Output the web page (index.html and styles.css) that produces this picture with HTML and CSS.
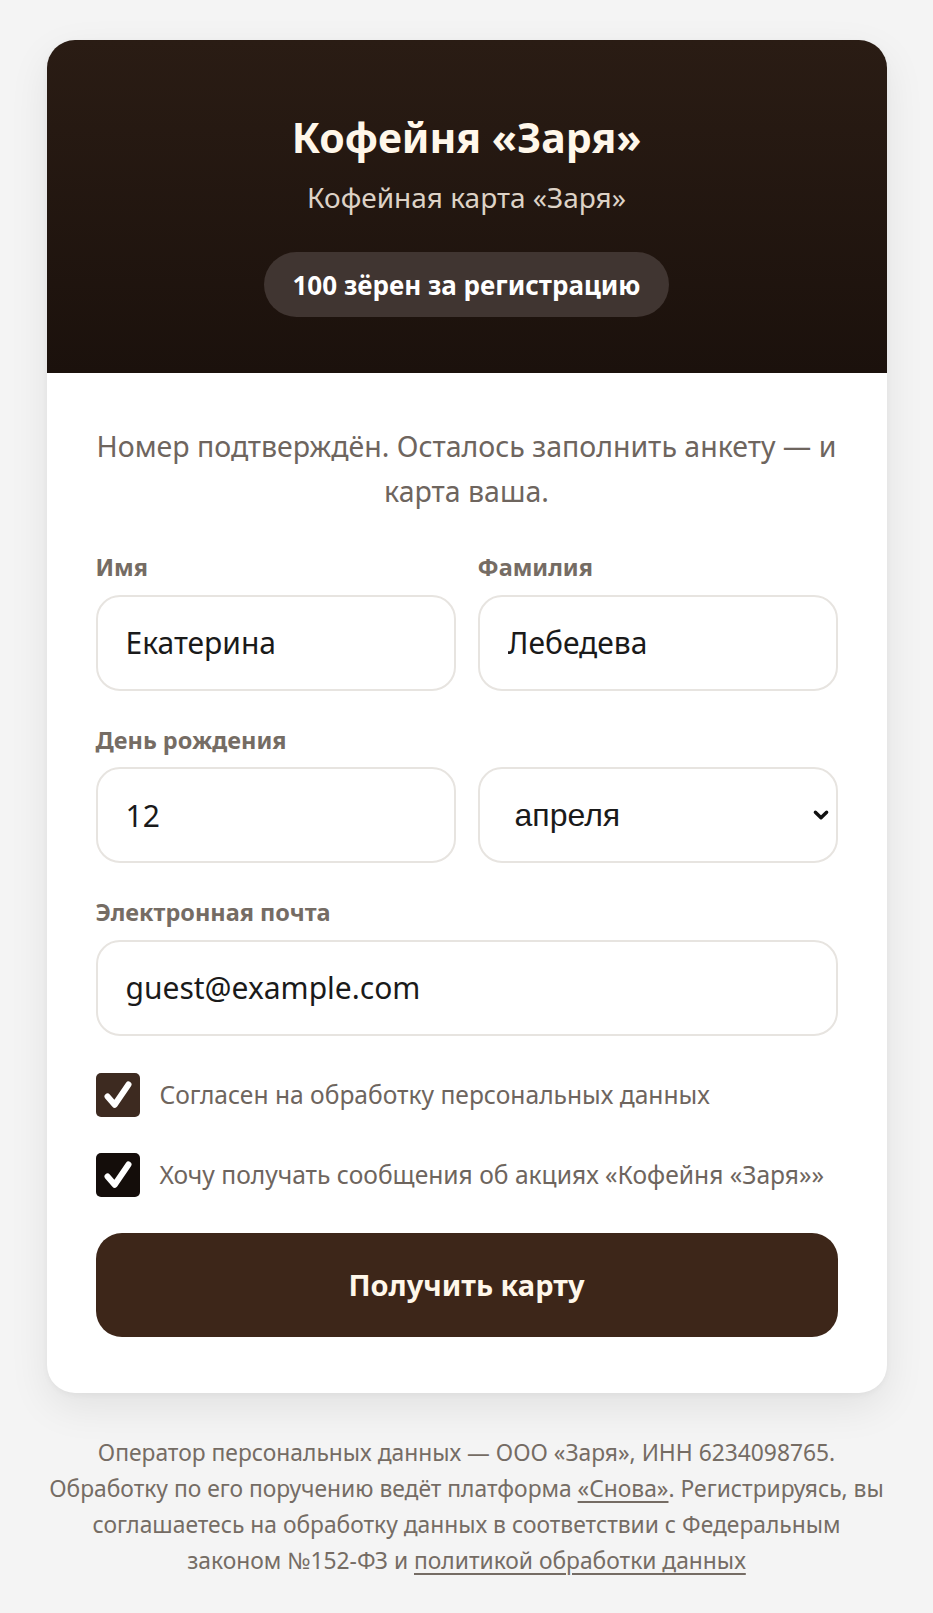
FILE: index.html
```html
<!DOCTYPE html>
<html lang="ru">
<head>
<meta charset="utf-8">
<title>Кофейня «Заря»</title>
<link rel="stylesheet" href="styles.css">
</head>
<body>
<main class="page">
  <section class="card">
    <header class="hero">
      <h1 class="hero-title">Кофейня «Заря»</h1>
      <p class="hero-sub">Кофейная карта «Заря»</p>
      <span class="pill">100 зёрен за регистрацию</span>
    </header>
    <form class="form">
      <p class="intro">Номер подтверждён. Осталось заполнить анкету — и карта ваша.</p>
      <div class="row">
        <label class="field">
          <span class="label">Имя</span>
          <input class="input" type="text" value="Екатерина">
        </label>
        <label class="field">
          <span class="label">Фамилия</span>
          <input class="input" type="text" value="Лебедева">
        </label>
      </div>
      <div class="field">
        <span class="label">День рождения</span>
        <div class="row">
          <input class="input" type="text" value="12">
          <div class="select-wrap">
            <select class="select">
              <option>апреля</option>
            </select>
            <svg class="chevron" viewBox="0 0 16 16" width="18" height="18" aria-hidden="true"><path d="M3 5.5 L8 10.5 L13 5.5" fill="none" stroke="#111" stroke-width="3" stroke-linecap="round" stroke-linejoin="round"/></svg>
          </div>
        </div>
      </div>
      <label class="field">
        <span class="label">Электронная почта</span>
        <input class="input" type="email" value="guest@example.com">
      </label>
      <div class="checks">
        <label class="check">
          <span class="box box-brown"><svg viewBox="0 0 24 24" width="36" height="36"><path d="M5 13 L9.8 18.5 L19 5" fill="none" stroke="#fff" stroke-width="4" stroke-linecap="round" stroke-linejoin="round"/></svg></span>
          <span class="check-text">Согласен на обработку персональных данных</span>
        </label>
        <label class="check">
          <span class="box box-dark"><svg viewBox="0 0 24 24" width="36" height="36"><path d="M5 13 L9.8 18.5 L19 5" fill="none" stroke="#fff" stroke-width="4" stroke-linecap="round" stroke-linejoin="round"/></svg></span>
          <span class="check-text">Хочу получать сообщения об акциях «Кофейня «Заря»»</span>
        </label>
      </div>
      <button class="btn" type="button">Получить карту</button>
    </form>
  </section>
  <p class="legal">Оператор персональных данных — ООО «Заря», ИНН 6234098765. Обработку по его поручению ведёт платформа <a href="#" class="link">«Снова»</a>. Регистрируясь, вы соглашаетесь на обработку данных в соответствии с Федеральным законом №152-ФЗ и <a href="#" class="link">политикой обработки данных</a></p>
</main>
</body>
</html>
```
FILE: styles.css
```css
* { box-sizing: border-box; }
html, body { margin: 0; padding: 0; }
body {
  background: #f4f4f4;
  font-family: "Segoe UI", "Noto Sans", "Open Sans", sans-serif;
  color: #1a1a1a;
}
.page {
  width: 840px;
  margin: 0 auto;
  padding: 40px 0 40px;
}
.card {
  background: #fff;
  border-radius: 28px;
  overflow: hidden;
  box-shadow: 0 14px 40px rgba(0,0,0,0.08), 0 2px 6px rgba(0,0,0,0.04);
}
.hero {
  background: linear-gradient(180deg, #2a1c14 0%, #1b110c 100%);
  padding: 71px 40px 56px;
  display: flex;
  flex-direction: column;
  align-items: center;
  text-align: center;
}
.hero-title {
  margin: 0;
  font-size: 41px;
  line-height: 52px;
  font-weight: 700;
  color: #fff7ea;
}
.hero-sub {
  margin: 15px 0 0;
  font-size: 28px;
  line-height: 38px;
  color: #ddd2c6;
}
.pill {
  margin-top: 36px;
  height: 65px;
  padding: 0 29px;
  display: inline-flex;
  align-items: center;
  border-radius: 33px;
  background: #403531;
  color: #fff;
  font-size: 26px;
  font-weight: 700;
}
.form {
  padding: 51px 49px 56px;
  display: flex;
  flex-direction: column;
}
.intro {
  margin: 0 0 38px;
  text-align: center;
  font-size: 28.5px;
  line-height: 45px;
  color: #6e655e;
}
.row {
  display: grid;
  grid-template-columns: 1fr 1fr;
  gap: 22px;
}
.form > .row { margin-bottom: 34px; }
.field {
  display: flex;
  flex-direction: column;
  gap: 12.5px;
  min-width: 0;
}
.form > .field { margin-bottom: 34px; }
.form > .field:last-of-type { margin-bottom: 0; }
.label {
  font-size: 23.5px;
  line-height: 30px;
  font-weight: 700;
  color: #756c64;
}
.input, .select {
  width: 100%;
  height: 96px;
  border: 2px solid #e7e4e0;
  border-radius: 24px;
  background: #fff;
  padding: 0 28px;
  font-family: inherit;
  font-size: 30px;
  color: #1a1a1a;
  outline: none;
}
.select-wrap {
  position: relative;
  min-width: 0;
}
.select {
  appearance: none;
  -webkit-appearance: none;
  font-family: "Liberation Sans", Arial, sans-serif;
  font-size: 32px;
  padding-left: 35px;
}
.chevron {
  position: absolute;
  right: 8px;
  top: 50%;
  transform: translateY(-50%);
  pointer-events: none;
}
.checks {
  display: flex;
  flex-direction: column;
  gap: 36px;
  margin: 37px 0 36px;
}
.check {
  display: flex;
  align-items: center;
  gap: 20px;
}
.box {
  flex: none;
  width: 44px;
  height: 44px;
  border-radius: 5px;
  display: flex;
  align-items: center;
  justify-content: center;
}
.box-brown { background: #3d2a20; }
.box-dark { background: #140d0a; }
.check-text {
  font-size: 24.6px;
  line-height: 30px;
  color: #6e655e;
  white-space: nowrap;
}
.btn {
  height: 104px;
  border: 0;
  border-radius: 26px;
  background: #3d2619;
  color: #fff7ea;
  font-family: inherit;
  font-size: 29px;
  font-weight: 700;
  cursor: pointer;
}
.legal {
  margin: 42px 0 0;
  text-align: center;
  font-size: 22.8px;
  line-height: 36px;
  color: #756c64;
}
.link {
  color: inherit;
  text-decoration: underline;
  text-underline-offset: 4px;
}
```
